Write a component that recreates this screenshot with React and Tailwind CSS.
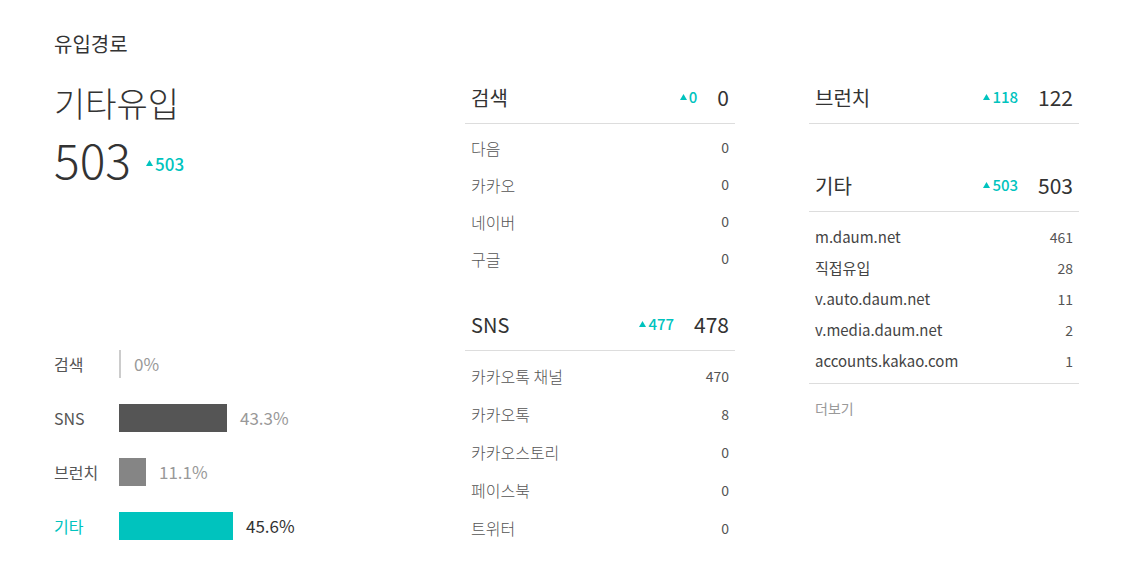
import React from "react";

const teal = "text-[#00c3be]";

const Delta = ({ value, size = "text-[15px]" }) => (
  <span className={`flex items-center gap-[2px] ${teal} ${size} font-medium`}>
    <svg width="7" height="6" viewBox="0 0 7 6" className="mb-[1px]">
      <path d="M3.5 0 L7 6 L0 6 Z" fill="#00c3be" />
    </svg>
    {value}
  </span>
);

const Header = ({ title, delta, total }) => (
  <div className="flex h-[52px] items-center border-b border-[#dddddd] pl-[6px] pr-[6px]">
    <span className="flex-1 text-[20px] text-[#333]">{title}</span>
    <Delta value={delta} />
    <span className="ml-[20px] text-[21px] text-[#333]">{total}</span>
  </div>
);

const searchRows = [
  ["다음", 0],
  ["카카오", 0],
  ["네이버", 0],
  ["구글", 0],
];

const snsRows = [
  ["카카오톡 채널", 470],
  ["카카오톡", 8],
  ["카카오스토리", 0],
  ["페이스북", 0],
  ["트위터", 0],
];

const etcRows = [
  ["m.daum.net", 461],
  ["직접유입", 28],
  ["v.auto.daum.net", 11],
  ["v.media.daum.net", 2],
  ["accounts.kakao.com", 1],
];

const bars = [
  { label: "검색", pct: "0%", width: 0, color: "", active: false },
  { label: "SNS", pct: "43.3%", width: 108, color: "bg-[#555555]", active: false },
  { label: "브런치", pct: "11.1%", width: 27, color: "bg-[#858585]", active: false },
  { label: "기타", pct: "45.6%", width: 114, color: "bg-[#00c3be]", active: true },
];

export default function App() {
  return (
    <div
      className="min-h-screen bg-white pl-[54px] pt-[30px]"
      style={{ fontFamily: '"Noto Sans CJK KR", "Noto Sans", sans-serif' }}
    >
      <h2 className="text-[20px] leading-[28px] text-[#333]">유입경로</h2>

      <div className="mt-[14px] flex">
        {/* left summary */}
        <div className="w-[411px]">
          <div className="mt-[11px] text-[34px] font-light leading-[40px] text-[#333]">기타유입</div>
          <div className="mt-[8px] flex items-end">
            <span className="text-[48px] font-light leading-[54px] text-[#333]">503</span>
            <span className="mb-[9px] ml-[15px]">
              <Delta value="503" size="text-[17px]" />
            </span>
          </div>

          <div className="mt-[165px] flex flex-col gap-[26px]">
            {bars.map((b) => (
              <div key={b.label} className="flex h-[28px] items-center">
                <span
                  className={`w-[65px] text-[16px] ${b.active ? "text-[#00c3be]" : "text-[#555]"}`}
                >
                  {b.label}
                </span>
                {b.width === 0 ? (
                  <div className="h-[28px] w-[2px] bg-[#cccccc]" />
                ) : (
                  <div className={`h-[28px] ${b.color}`} style={{ width: b.width }} />
                )}
                <span
                  className={`ml-[13px] text-[17px] ${b.active ? "text-[#333]" : "text-[#999]"}`}
                >
                  {b.pct}
                </span>
              </div>
            ))}
          </div>
        </div>

        {/* middle */}
        <div className="w-[270px]">
          <Header title="검색" delta="0" total="0" />
          <div className="pt-[5px]">
            {searchRows.map(([k, v]) => (
              <div key={k} className="flex h-[37px] items-center px-[6px]">
                <span className="flex-1 text-[16px] font-light text-[#555]">{k}</span>
                <span className="text-[14px] text-[#555]">{v}</span>
              </div>
            ))}
          </div>
          <div className="mt-[22px]">
            <Header title="SNS" delta="477" total="478" />
            <div className="pt-[6px]">
              {snsRows.map(([k, v]) => (
                <div key={k} className="flex h-[38px] items-center px-[6px]">
                  <span className="flex-1 text-[16px] font-light text-[#555]">{k}</span>
                  <span className="text-[14px] text-[#555]">{v}</span>
                </div>
              ))}
            </div>
          </div>
        </div>

        {/* right */}
        <div className="ml-[74px] w-[270px]">
          <Header title="브런치" delta="118" total="122" />
          <div className="mt-[36px]">
            <Header title="기타" delta="503" total="503" />
            <div className="border-b border-[#dddddd] pb-[6px] pt-[10px]">
              {etcRows.map(([k, v]) => (
                <div key={k} className="flex h-[31px] items-center px-[6px]">
                  <span className="flex-1 text-[15px] text-[#444]">{k}</span>
                  <span className="text-[14px] text-[#555]">{v}</span>
                </div>
              ))}
            </div>
            <div className="mt-[14px] px-[6px] text-[14px] leading-[20px] text-[#999]">더보기</div>
          </div>
        </div>
      </div>
    </div>
  );
}
